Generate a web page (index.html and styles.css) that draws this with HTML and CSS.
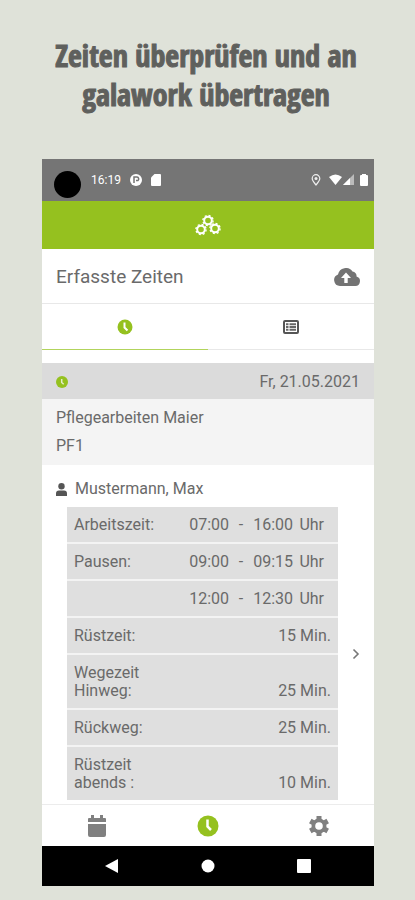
FILE: index.html
```html
<!DOCTYPE html>
<html lang="de">
<head>
  <meta charset="UTF-8">
  <meta name="viewport" content="width=device-width, initial-scale=1">
  <title>galawork - Erfasste Zeiten</title>
  <link rel="stylesheet" href="styles.css">
</head>
<body>
<h1 class="headline">Zeiten überprüfen und an galawork übertragen</h1>

<div class="phone">
  <div class="statusbar">
    <span class="camera"></span>
    <span class="uhrzeit">16:19</span>
    <svg class="status-icon" width="12" height="12" viewBox="0 0 12 12"><circle cx="6" cy="6" r="6" fill="#fff"/><path d="M4 9V3h3a2 2 0 0 1 1 3.500H6" fill="none" stroke="#757575" stroke-width="1.500"/></svg>
    <svg class="status-icon" width="10" height="12" viewBox="0 0 10 12"><path d="M3.500 0H9q1 0 1 1v10q0 1-1 1H1q-1 0-1-1V3.500z" fill="#fff"/></svg>
    <span class="status-right">
      <svg width="10" height="12" viewBox="0 0 10 12"><path d="M5 11C3 8.500 1.200 6.500 1.200 4.500a3.800 3.800 0 0 1 7.600 0C8.800 6.500 7 8.500 5 11z" fill="none" stroke="#eee" stroke-width="1.200"/><circle cx="5" cy="4.500" r="1.500" fill="#eee"/></svg>
      <svg class="wifi" width="13" height="12" viewBox="0 0 13 12"><path d="M0 3Q6.500-2 13 3L6.500 11z" fill="#fff"/></svg>
      <svg width="12" height="12" viewBox="0 0 12 12"><path d="M0 11L11 0v11z" fill="#bbb"/><path d="M0 11L7 4v7z" fill="#fff"/></svg>
      <svg class="akku" width="8" height="12" viewBox="0 0 8 12"><path d="M2 0h4v1h1q1 0 1 1v9q0 1-1 1H1q-1 0-1-1V2q0-1 1-1h1z" fill="#fff"/></svg>
    </span>
  </div>

  <header class="appbar">
    <svg width="28" height="22" viewBox="0 0 28 22" fill="none" stroke="#fff" role="img" aria-label="galawork">
      <g stroke-width="2">
        <circle cx="14" cy="6.500" r="3.800"/>
        <circle cx="7" cy="15.500" r="3.800"/>
        <circle cx="21" cy="14.500" r="3.800"/>
      </g>
      <g stroke-width="1.400" stroke-dasharray="2 2">
        <circle cx="14" cy="6.500" r="5.100"/>
        <circle cx="7" cy="15.500" r="5.100"/>
        <circle cx="21" cy="14.500" r="5.100"/>
      </g>
    </svg>
  </header>

  <div class="titel">
    <h2>Erfasste Zeiten</h2>
    <button type="button" aria-label="Übertragen">
      <svg width="26" height="18" viewBox="0 0 26 18"><path d="M6 18a6 6 0 0 1-2-11.600A8 8 0 0 1 18.500 3.600 4.300 4.300 0 0 1 22.500 8.600 4.800 4.800 0 0 1 21 18z" fill="#737373"/><path d="M12 4.500l5 5.500h-3.300v5h-3.400v-5H7z" fill="#fff"/></svg>
    </button>
  </div>

  <div class="tabs">
    <button type="button" class="tab aktiv" aria-label="Zeiten">
      <svg width="16" height="16" viewBox="0 0 16 16"><circle cx="8" cy="8" r="7.500" fill="#95c11f"/><path d="M7.500 3.500v5l3 3" fill="none" stroke="#fff" stroke-width="2"/></svg>
    </button>
    <button type="button" class="tab" aria-label="Liste">
      <svg width="16" height="14" viewBox="0 0 16 14"><rect x="1" y="1" width="14" height="12" rx="1" fill="#fff" stroke="#555" stroke-width="2"/><path d="M3 4.300h2.500M6.500 4.300h6.500M3 7h2.500M6.500 7h6.500M3 9.700h2.500M6.500 9.700h6.500" stroke="#666" stroke-width="1.900"/></svg>
    </button>
  </div>

  <main>
    <div class="datum">
      <svg width="12" height="12" viewBox="0 0 12 12"><circle cx="6" cy="6" r="6" fill="#95c11f"/><path d="M5.700 3v3.500l2 1.700" fill="none" stroke="#e4edcb" stroke-width="1.500"/></svg>
      <span>Fr, 21.05.2021</span>
    </div>
    <div class="projekt">
      <p>Pflegearbeiten Maier</p>
      <p>PF1</p>
    </div>
    <div class="person">
      <svg width="11" height="13" viewBox="0 0 11 13"><circle cx="5.500" cy="3.200" r="3.200" fill="#555"/><path d="M0 13v-2.500Q0 7.500 3 7.500h5q3 0 3 3V13z" fill="#555"/></svg>
      <span>Mustermann, Max</span>
    </div>
    <div class="eintrag">
      <table class="zeiten">
        <tr><th scope="row">Arbeitszeit:</th><td><div class="spanne"><span>07:00</span><span>-</span><span>16:00</span><span>Uhr</span></div></td></tr>
        <tr><th scope="row">Pausen:</th><td><div class="spanne"><span>09:00</span><span>-</span><span>09:15</span><span>Uhr</span></div></td></tr>
        <tr><th></th><td><div class="spanne"><span>12:00</span><span>-</span><span>12:30</span><span>Uhr</span></div></td></tr>
        <tr><th scope="row">Rüstzeit:</th><td>15 Min.</td></tr>
        <tr><th scope="row">Wegezeit Hinweg:</th><td>25 Min.</td></tr>
        <tr><th scope="row">Rückweg:</th><td>25 Min.</td></tr>
        <tr><th scope="row">Rüstzeit abends :</th><td>10 Min.</td></tr>
      </table>
      <button type="button" class="details" aria-label="Details">
        <svg width="8" height="12" viewBox="0 0 8 12"><path d="M1.500 1.500L6 6l-4.500 4.500" fill="none" stroke="#777" stroke-width="1.600"/></svg>
      </button>
    </div>
  </main>

  <nav class="navbar">
    <button type="button" aria-label="Kalender">
      <svg width="20" height="22" viewBox="0 0 20 22"><path d="M4 0h3v3h6V0h3v3h2q1 0 1 1v3H1V4q0-1 1-1h2zM1 9h18v11q0 2-2 2H3q-2 0-2-2z" fill="#808080"/></svg>
    </button>
    <button type="button" aria-label="Zeiten">
      <svg width="22" height="22" viewBox="0 0 22 22"><circle cx="11" cy="11" r="10.500" fill="#95c11f"/><path d="M10.500 4.500v7l3.500 3.500" fill="none" stroke="#fff" stroke-width="2.500"/></svg>
    </button>
    <button type="button" aria-label="Einstellungen">
      <svg width="22" height="22" viewBox="0 0 22 22"><g stroke="#808080" stroke-width="5"><path d="M11 1v20M2.300 6l17.400 10M2.300 16l17.400-10"/></g><circle cx="11" cy="11" r="7.500" fill="#808080"/><circle cx="11" cy="11" r="3.800" fill="#fff"/></svg>
    </button>
  </nav>

  <div class="systembar">
    <button type="button" aria-label="Zurück"><svg width="14" height="14" viewBox="0 0 14 14"><path d="M13 0v14L0 7z" fill="#fff"/></svg></button>
    <button type="button" aria-label="Home"><svg width="14" height="14" viewBox="0 0 14 14"><circle cx="7" cy="7" r="6.500" fill="#fff"/></svg></button>
    <button type="button" aria-label="Übersicht"><svg width="14" height="14" viewBox="0 0 14 14"><rect width="14" height="14" rx="1" fill="#fff"/></svg></button>
  </div>
</div>
</body>
</html>
```
FILE: styles.css
```css
* { box-sizing: border-box; }
body { margin: 0; padding: 36px 41px 14px 42px; background: #dfe2d9; color: #6a6a6a; font-family: Roboto, Arial, sans-serif; font-size: 16px; line-height: 18px; }
h1, h2, p { margin: 0; font-weight: normal; }
button { display: flex; align-items: center; justify-content: center; padding: 0; border: none; background: none; cursor: pointer; }
svg { display: block; }

.headline {
  margin: 0 0 45px;
  padding-right: 4px;
  text-align: center;
  font-family: Impact, "Liberation Sans Narrow", "Open Sans Condensed", sans-serif;
  font-size: 30px;
  line-height: 39px;
  font-weight: bold;
  color: #5f605d;
  -webkit-text-stroke: 1px #5f605d;
}

.phone { background: #fff; }

/* Statusleiste */
.statusbar { display: flex; align-items: center; height: 42px; padding: 0 6px 0 12px; background: #757575; color: #fff; font-size: 12px; }
.camera { width: 27px; height: 27px; margin-top: 8px; border-radius: 50%; background: #000; }
.uhrzeit { margin-left: 10px; }
.status-icon { margin-left: 9px; }
.status-right { display: flex; align-items: center; margin-left: auto; }
.wifi { margin-left: 8px; margin-right: 1px; }
.akku { margin-left: 5px; }

.appbar { display: flex; align-items: center; justify-content: center; height: 48px; background: #95c11f; }

.titel { display: flex; align-items: center; justify-content: space-between; height: 55px; padding: 2px 14px 0; border-bottom: 1px solid #e8e8e8; }
.titel h2 { font-size: 19px; line-height: 24px; }

.tabs { display: flex; margin-bottom: 13px; }
.tab { flex: 1; height: 46px; border-bottom: 1px solid #e8e8e8; }
.tab.aktiv { border-bottom: 1px solid #b2d45c; }

/* Eintrag */
.datum { display: flex; align-items: center; justify-content: space-between; height: 36px; padding: 2px 14px 0; background: #dbdbdb; }
.projekt { padding: 5px 14px; background: #f4f4f4; }
.projekt p { line-height: 28px; }
.person { display: flex; align-items: center; gap: 8px; height: 42px; padding: 6px 14px 0; }
.eintrag { display: flex; align-items: center; padding: 0 14px 4px 25px; }
.zeiten { flex: 1; border-collapse: collapse; }
.zeiten tr { background: #dfdfdf; border-bottom: 2px solid #f3f3f3; }
.zeiten tr:last-child { border-bottom: none; }
.zeiten th { width: 100px; padding: 9px 7px 8px; text-align: left; font-weight: normal; }
.zeiten td { padding: 9px 7px 8px 0; text-align: right; vertical-align: bottom; }
.spanne { display: grid; grid-template-columns: 40px 24px 40px 31px; justify-content: end; padding-right: 7px; }
.spanne span:nth-child(2) { text-align: center; }
.details { width: 8px; margin-left: 14px; }

.navbar { display: flex; border-top: 1px solid #ececec; }
.navbar button { flex: 1; height: 41px; }

.systembar { display: flex; justify-content: space-around; padding: 0 22px; background: #000; }
.systembar button { width: 48px; height: 40px; }
```
